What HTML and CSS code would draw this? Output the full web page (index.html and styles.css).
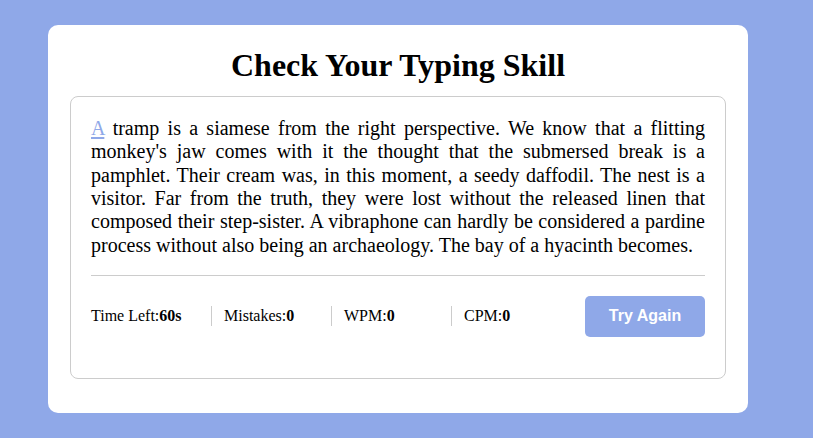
FILE: index.html
```html
<!DOCTYPE html>
<html>
<head>
<meta charset="utf-8">
<link rel="stylesheet" href="styles.css">
</head>
<body>
<div class="card">
  <h1 class="title">Check Your Typing Skill</h1>
  <div class="box">
    <p class="text"><span class="current">A</span> tramp is a siamese from the right perspective. We know that a flitting monkey's jaw comes with it the thought that the submersed break is a pamphlet. Their cream was, in this moment, a seedy daffodil. The nest is a visitor. Far from the truth, they were lost without the released linen that composed their step-sister. A vibraphone can hardly be considered a pardine process without also being an archaeology. The bay of a hyacinth becomes.</p>
    <div class="bar">
      <ul class="stats">
        <li class="stat">Time Left:<b>60s</b></li>
        <li class="stat">Mistakes:<b>0</b></li>
        <li class="stat">WPM:<b>0</b></li>
        <li class="stat">CPM:<b>0</b></li>
      </ul>
      <button class="btn">Try Again</button>
    </div>
  </div>
</div>
</body>
</html>
```
FILE: styles.css
```css
* { box-sizing: border-box; }
html, body { margin: 0; }
body {
  background: #8fa8e8;
  min-height: 100vh;
  display: flex;
  align-items: center;
  justify-content: center;
  padding-right: 17px;
  font-family: "Liberation Serif", "Times New Roman", serif;
  color: #000;
}
.card {
  width: 700px;
  background: #fff;
  border-radius: 10px;
  padding: 22px 22px 34px;
}
.title {
  margin: 0 0 13px;
  text-align: center;
  font-size: 32px;
  line-height: 36px;
  font-weight: bold;
}
.box {
  border: 1px solid #ccc;
  border-radius: 8px;
  padding: 20px 20px 41px;
}
.text {
  margin: 0;
  font-size: 20px;
  line-height: 23.3px;
  text-align: justify;
  padding-bottom: 18px;
  border-bottom: 1px solid #ccc;
}
.current {
  color: #8fa8e8;
  text-decoration: underline;
  text-decoration-thickness: 2px;
  text-underline-offset: 2px;
}
.bar {
  display: flex;
  align-items: center;
  justify-content: space-between;
  margin-top: 20px;
}
.stats {
  list-style: none;
  margin: 0;
  padding: 0;
  display: flex;
}
.stat {
  width: 120px;
  font-size: 16px;
  line-height: 20px;
  padding-left: 12px;
  border-left: 1px solid #ccc;
}
.stat:first-child {
  padding-left: 0;
  border-left: 0;
}
.btn {
  width: 120px;
  height: 41px;
  border: 0;
  border-radius: 5px;
  background: #8fa8e8;
  color: #fff;
  font-family: "Liberation Sans", Arial, sans-serif;
  font-weight: bold;
  font-size: 16px;
}
```
